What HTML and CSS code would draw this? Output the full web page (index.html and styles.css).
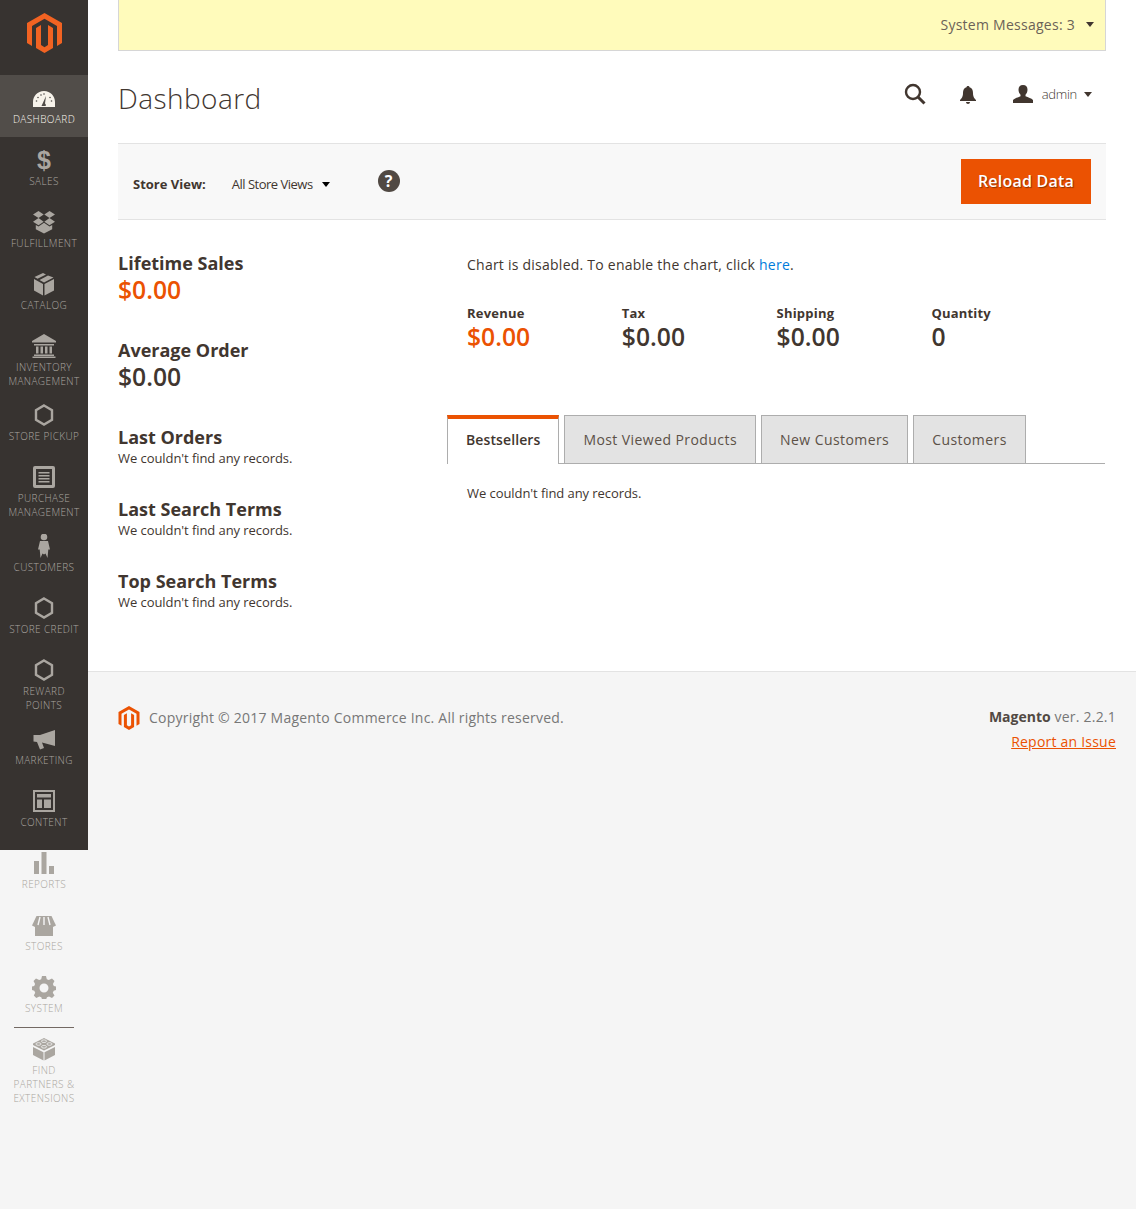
FILE: index.html
```html
<!DOCTYPE html>
<html lang="en">
<head>
  <meta charset="UTF-8" />
  <meta name="viewport" content="width=device-width, initial-scale=1.0"/>
  <title>Dashboard / Magento Admin</title>
  <link rel="stylesheet" href="styles.css">
</head>
<body>
  <svg class="defs" width="0" height="0">
    <symbol id="logo" viewBox="0 0 35 40">
      <path d="M17.5 0L35 10v20l-5 2.900v-20L17.500 5.700 5 12.900v20L0 30V10z"/>
      <path d="M17.5 40L9 35V15l5-2.900v20l3.500 2.100 3.500-2.100v-20l5 2.900v20z"/>
    </symbol>
    <symbol id="hex" viewBox="0 0 24 24">
      <path d="M12 2.500l8 4.700v9.600l-8 4.700-8-4.700V7.200z" fill="none" stroke="currentColor" stroke-width="2.400"/>
    </symbol>
  </svg>

  <nav class="sidebar">
    <a class="logo"><svg class="logo-icon"><use href="#logo"/></svg></a>
    <ul class="menu">
      <li class="menu-item active">
        <svg class="icon" viewBox="0 0 24 24"><path fill-rule="evenodd" d="M12 5C5.500 5 1 10 1 16v5h22v-5C23 10 18.500 5 12 5zM9.500 20l4.500-10-1 7.500c.8.500 1 1.500.7 2.500z"/><g fill="#514d49"><circle cx="4.500" cy="15" r=".8"/><circle cx="6" cy="11.500" r=".8"/><circle cx="9" cy="9" r=".8"/><circle cx="12" cy="8" r=".8"/><circle cx="18" cy="11.500" r=".8"/><circle cx="19.500" cy="15" r=".8"/></g></svg>
        <span>DASHBOARD</span>
      </li>
      <li class="menu-item">
        <span class="icon dollar">$</span>
        <span>SALES</span>
      </li>
      <li class="menu-item">
        <svg class="icon" viewBox="0 0 24 24"><path d="M6.500 1l5.200 3.600-5.200 3.500L1 4.600zM17.500 1L23 4.600l-5.500 3.500-5.200-3.500zM1 11.700l5.500-3.600 5.200 3.600-5.200 3.500zM23 11.700l-5.500-3.600-5.200 3.600 5.200 3.500zM6.500 16.500l5.500-3.800 5.500 3.800 2.700-1.600v4.300L12 23.500l-8.200-4.300v-4.300z"/></svg>
        <span>FULFILLMENT</span>
      </li>
      <li class="menu-item">
        <svg class="icon" viewBox="0 0 24 24"><path d="M11 1L2.500 5l3 1.700L14 2.500zM16 3.500L7.500 8 12 10.500l9.500-5zM2 7v11.500L11 23.500V12zM22 7l-9.500 5v11.500l9.500-5z"/></svg>
        <span>CATALOG</span>
      </li>
      <li class="menu-item two-line">
        <svg class="icon wide" viewBox="0 0 26 24"><path d="M13 0L25 7v1.500H1V7zM3 10h20v1.500H3zM5 12.500h2.500v7H5zM9.500 12.500H12v7H9.500zM14 12.500h2.500v7H14zM18.500 12.500H21v7h-2.500zM3 20.500h20V22H3zM1.500 22.500h23V24h-23z"/></svg>
        <span>INVENTORY<br>MANAGEMENT</span>
      </li>
      <li class="menu-item">
        <svg class="icon"><use href="#hex"/></svg>
        <span>STORE PICKUP</span>
      </li>
      <li class="menu-item two-line">
        <svg class="icon" viewBox="0 0 24 24"><path fill-rule="evenodd" d="M3 1h18a2 2 0 0 1 2 2v18a2 2 0 0 1-2 2H3a2 2 0 0 1-2-2V3a2 2 0 0 1 2-2zm1 3v16h16V4z"/><path d="M6.500 7h11v1.500h-11zM6.500 10h11v1.500h-11zM6.500 13h11v1.500h-11zM6.500 16h11v1.500h-11z"/></svg>
        <span>PURCHASE<br>MANAGEMENT</span>
      </li>
      <li class="menu-item">
        <svg class="icon" viewBox="0 0 24 24"><circle cx="12" cy="3" r="3.300"/><path d="M8 7h8l2 8.500-1.700 0-.8 8.500-2-4.500-1.500 1-1.500-1-2 4.500-.8-8.500-1.700 0z"/></svg>
        <span>CUSTOMERS</span>
      </li>
      <li class="menu-item">
        <svg class="icon"><use href="#hex"/></svg>
        <span>STORE CREDIT</span>
      </li>
      <li class="menu-item two-line">
        <svg class="icon"><use href="#hex"/></svg>
        <span>REWARD<br>POINTS</span>
      </li>
      <li class="menu-item">
        <svg class="icon" viewBox="0 0 24 24"><path d="M23 3v16l-13-3.500 2 5.500-4 1.500-3-7.500-3.500-.5V8H8z"/></svg>
        <span>MARKETING</span>
      </li>
      <li class="menu-item">
        <svg class="icon" viewBox="0 0 24 24"><path fill-rule="evenodd" d="M1 1h22v22H1zm2 2v18h18V3z"/><path d="M5 5h14v3.500H5zM5 10.500h5V19H5zM12 10.500h7V19h-7z"/></svg>
        <span>CONTENT</span>
      </li>
      <li class="menu-item">
        <svg class="icon" viewBox="0 0 24 24"><path d="M2 10h5v13H2zM9.500 1h5v22h-5zM17 15h5v8h-5z"/></svg>
        <span>REPORTS</span>
      </li>
      <li class="menu-item">
        <svg class="icon" viewBox="0 0 24 24"><path d="M4.500 3h15L24 12.500l-3 1.500H3l-3-1.500z"/><path d="M3 13h18v10H3z"/><path d="M8 4l-2 8M12 4v8M16 4l2 8" stroke="#f5f5f5" stroke-width="1.400"/></svg>
        <span>STORES</span>
      </li>
      <li class="menu-item">
        <svg class="icon" viewBox="0 0 24 24"><path fill-rule="evenodd" d="M10 1h4l.8 3.200 2 .8L20 3.500 22.500 6l-1.600 3 .9 2L24 11.500v3.500l-2.300.7-.9 2 1.700 2.800-2.500 2.500-3-1.600-2 .8-.9 2.300h-4l-.8-2.300-2-.8-3 1.600-2.500-2.500L3.200 17.700l-.9-2L0 15v-3.500l2.200-.5.900-2L1.500 6 4 3.500 7.200 5l2-.8zM12 8.500a4.500 4.500 0 1 0 0 9 4.500 4.500 0 0 0 0-9z"/></svg>
        <span>SYSTEM</span>
      </li>
      <li class="menu-item extensions">
        <svg class="icon" viewBox="0 0 24 24"><path d="M12 1l11 5.500V8L12 13.500 1 8V6.500zM1 10l10.500 5.300V23.500L1 18zM23 10l-10.500 5.300V23.500L23 18z"/><g fill="none" stroke="#f5f5f5" stroke-width=".8"><ellipse cx="12" cy="4.200" rx="2.600" ry="1.300"/><ellipse cx="6.500" cy="7" rx="2.600" ry="1.300"/><ellipse cx="17.500" cy="7" rx="2.600" ry="1.300"/><ellipse cx="12" cy="9.800" rx="2.600" ry="1.300"/></g></svg>
        <span>FIND<br>PARTNERS &amp;<br>EXTENSIONS</span>
      </li>
    </ul>
  </nav>

  <div class="page">
    <main class="content">
      <div class="messages">
        <span>System Messages: 3</span>
        <i class="caret"></i>
      </div>

      <header class="page-header">
        <h1>Dashboard</h1>
        <div class="actions">
          <svg class="search" viewBox="0 0 22 22"><circle cx="9" cy="9" r="7" fill="none" stroke="#41362f" stroke-width="2.400"/><path d="M14 14l6.500 6.500" stroke="#41362f" stroke-width="3"/></svg>
          <svg class="bell" viewBox="0 0 16 18"><path d="M8 0c1 0 1.500.6 1.500 1.300C12 2 13 4 13 7c0 4 1.500 5.500 3 7v1H0v-1c1.500-1.500 3-3 3-7 0-3 1-5 3.500-5.700C6.500.6 7 0 8 0zM6 16h4c0 1-1 2-2 2s-2-1-2-2z"/></svg>
          <div class="user">
            <svg class="user-icon" viewBox="0 0 20 18"><path d="M10 0c3 0 4.500 2 4.500 4.700 0 2-1 4-2 5v1.500c2.500 1.200 6 2 7.500 3.800V18H0v-3c1.500-1.800 5-2.600 7.500-3.800V9.700c-1-1-2-3-2-5C5.500 2 7 0 10 0z"/></svg>
            <span class="user-name">admin</span>
            <i class="caret small"></i>
          </div>
        </div>
      </header>

      <div class="store-bar">
        <div class="store-left">
          <strong>Store View:</strong>
          <span class="store-select">All Store Views</span>
          <i class="caret dark"></i>
          <span class="help">?</span>
        </div>
        <button class="reload">Reload Data</button>
      </div>

      <div class="columns">
        <aside class="totals">
          <section class="total">
            <h2>Lifetime Sales</h2>
            <p class="amount orange">$0.00</p>
          </section>
          <section class="total">
            <h2>Average Order</h2>
            <p class="amount">$0.00</p>
          </section>
          <section class="record">
            <h2>Last Orders</h2>
            <p>We couldn't find any records.</p>
          </section>
          <section class="record">
            <h2>Last Search Terms</h2>
            <p>We couldn't find any records.</p>
          </section>
          <section class="record">
            <h2>Top Search Terms</h2>
            <p>We couldn't find any records.</p>
          </section>
        </aside>

        <div class="report">
          <p class="chart-note">Chart is disabled. To enable the chart, click <a>here</a>.</p>
          <div class="stats">
            <div class="stat"><h3>Revenue</h3><p class="amount orange">$0.00</p></div>
            <div class="stat"><h3>Tax</h3><p class="amount">$0.00</p></div>
            <div class="stat"><h3>Shipping</h3><p class="amount">$0.00</p></div>
            <div class="stat"><h3>Quantity</h3><p class="amount">0</p></div>
          </div>
          <ul class="tabs">
            <li class="tab selected">Bestsellers</li>
            <li class="tab">Most Viewed Products</li>
            <li class="tab">New Customers</li>
            <li class="tab">Customers</li>
          </ul>
          <p class="tab-body">We couldn't find any records.</p>
        </div>
      </div>
    </main>

    <footer class="footer">
      <div class="copyright">
        <svg class="footer-logo"><use href="#logo"/></svg>
        <span>Copyright © 2017 Magento Commerce Inc. All rights reserved.</span>
      </div>
      <div class="version">
        <p><strong>Magento</strong> ver. 2.2.1</p>
        <a>Report an Issue</a>
      </div>
    </footer>
  </div>
</body>
</html>
```

FILE: styles.css
```css
* {
  box-sizing: border-box;
}

html,
body {
  margin: 0;
  min-height: 1209px;
}

body {
  display: flex;
  background: #f5f5f5;
  color: #41362f;
  font-family: 'Open Sans', sans-serif;
  font-size: 14px;
}

.defs {
  position: absolute;
}

h1, h2, h3, p, ul {
  margin: 0;
  padding: 0;
}

ul {
  list-style: none;
}

/* sidebar */
.sidebar {
  flex: 0 0 88px;
  width: 88px;
  height: 850px;
  background: #373330;
}

.logo {
  display: block;
  height: 75px;
  padding: 13px 0 0 27px;
}

.logo-icon {
  display: block;
  width: 35px;
  height: 40px;
  fill: #f26322;
}

.menu-item {
  display: flex;
  flex-direction: column;
  align-items: center;
  height: 62px;
  padding-top: 11px;
  color: #aaa6a0;
  font-size: 10px;
  font-weight: 350;
  line-height: 14px;
  letter-spacing: 0.4px;
  text-align: center;
}

.menu-item.two-line {
  height: 69px;
}

.menu-item.active {
  background: #514d49;
  color: #f7f3eb;
}

.menu-item.extensions {
  position: relative;
  height: 90px;
}

.menu-item.extensions::before {
  content: "";
  position: absolute;
  top: 1px;
  left: 14px;
  width: 60px;
  border-top: 1px solid #736963;
}

.icon {
  display: block;
  flex: none;
  width: 24px;
  height: 24px;
  margin-bottom: 2px;
  fill: currentColor;
}

.icon.wide {
  width: 26px;
}

.dollar {
  font-family: 'Liberation Sans', sans-serif;
  font-size: 25px;
  font-weight: bold;
  line-height: 24px;
  letter-spacing: 0;
}

/* main area */
.page {
  flex: 1;
  min-width: 0;
}

.content {
  height: 671px;
  padding: 0 30px;
  background: #fff;
}

.messages {
  display: flex;
  align-items: center;
  justify-content: flex-end;
  gap: 11px;
  height: 51px;
  padding: 0 11px 2px 0;
  background: #fffbbb;
  border: 1px solid #d6d6d6;
  border-top: none;
  letter-spacing: 0.26px;
  color: #6b6258;
}

.caret {
  width: 0;
  height: 0;
  border-left: 4.5px solid transparent;
  border-right: 4.5px solid transparent;
  border-top: 5px solid #41362f;
}

.caret.small {
  margin-left: 7px;
}

.caret.dark {
  margin-left: 9px;
  border-top-color: #000;
}

.page-header {
  display: flex;
  justify-content: space-between;
  height: 93px;
  border-bottom: 1px solid #e3e3e3;
  padding-top: 29px;
}

h1 {
  font-size: 28px;
  font-weight: 300;
  line-height: 36px;
  letter-spacing: 0.45px;
}

.actions {
  display: flex;
  align-items: flex-start;
  padding: 3px 14px 0 0;
}

.search {
  width: 22px;
  height: 22px;
}

.bell {
  width: 16px;
  height: 18px;
  margin: 3px 0 0 34px;
  fill: #41362f;
}

.user {
  display: flex;
  align-items: center;
  margin-left: 38px;
  height: 22px;
}

.user-icon {
  width: 20px;
  height: 18px;
  margin: 0 9px 0 -1px;
  fill: #41362f;
}

.user-name {
  font-size: 13px;
  font-weight: 300;
  letter-spacing: -0.3px;
}

.store-bar {
  display: flex;
  align-items: center;
  justify-content: space-between;
  height: 76px;
  padding: 0 15px;
  background: #f8f8f8;
  border-bottom: 1px solid #e3e3e3;
}

.store-left {
  display: flex;
  align-items: center;
  padding-top: 5px;
}

.store-left strong {
  font-size: 13px;
  font-weight: 700;
}

.store-select {
  margin-left: 26px;
  font-size: 13px;
  letter-spacing: -0.5px;
}

.help {
  width: 22px;
  height: 22px;
  margin: -6px 0 0 48px;
  border-radius: 50%;
  background: #514943;
  color: #fff;
  font-size: 16px;
  font-weight: 700;
  line-height: 22px;
  text-align: center;
}

.reload {
  width: 130px;
  height: 45px;
  padding: 0 0 2px;
  border: none;
  background: #eb5202;
  color: #fff;
  font-family: inherit;
  font-size: 16px;
  font-weight: 600;
  letter-spacing: 0.23px;
  text-shadow: 1px 1px 1px #0006;
}

.columns {
  display: flex;
  padding-top: 30px;
}

.totals {
  flex: 0 0 329px;
  width: 329px;
}

.totals h2 {
  font-size: 18px;
  font-weight: 700;
  line-height: 26px;
}

.amount {
  font-size: 24.700px;
  font-weight: 600;
  line-height: 28px;
}

.orange {
  color: #eb5202;
}

.total {
  height: 87px;
}

.record {
  height: 72px;
}

.record p,
.tab-body {
  font-size: 13px;
  line-height: 16px;
  letter-spacing: -0.07px;
}

.report {
  flex: 1;
  margin-right: 1px;
}

.chart-note {
  padding: 5px 0 0 20px;
  line-height: 20px;
  letter-spacing: 0.24px;
}

.chart-note a {
  color: #007bdb;
}

.stats {
  display: flex;
  height: 140px;
  padding: 29px 0 0 20px;
}

.stat {
  width: 154.800px;
}

.stat h3 {
  font-size: 13px;
  font-weight: 700;
  line-height: 18px;
  letter-spacing: 0.2px;
}

.stat .amount {
  margin-top: 1px;
}

.tabs {
  display: flex;
  gap: 5px;
  height: 49px;
  border-bottom: 1px solid #adadad;
}

.tab {
  padding: 0 18px;
  height: 49px;
  background: #e3e3e3;
  border: 1px solid #adadad;
  line-height: 47px;
  letter-spacing: 0.43px;
  color: #5c5147;
}

.tab.selected {
  background: #fff;
  border-top: 4px solid #eb5202;
  border-bottom: none;
  line-height: 41px;
  font-weight: 600;
  letter-spacing: 0.1px;
  color: #41362f;
}

.tab-body {
  padding: 21px 0 0 20px;
}

.footer {
  display: flex;
  justify-content: space-between;
  padding: 33px 20px 0 30px;
  border-top: 1px solid #e3e3e3;
  color: #777;
  letter-spacing: 0.22px;
}

.copyright {
  display: flex;
  align-items: center;
  height: 24px;
  gap: 9px;
}

.footer-logo {
  width: 22px;
  height: 24px;
  margin-top: 2px;
  fill: #eb5202;
}

.version {
  text-align: right;
  line-height: 24px;
}

.version p {
  margin-bottom: 1px;
}

.version strong {
  color: #514943;
  letter-spacing: 0;
}

.version a {
  color: #eb5202;
  text-decoration: underline;
}
```
